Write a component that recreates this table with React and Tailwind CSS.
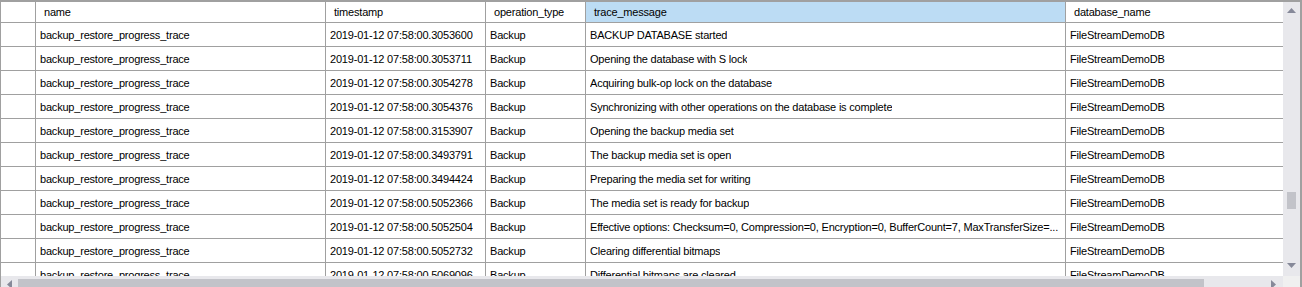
import React from "react";

const cols = [
  { key: "name", label: "name", w: "w-[290px]" },
  { key: "ts", label: "timestamp", w: "w-[160px]" },
  { key: "op", label: "operation_type", w: "w-[100px]" },
  { key: "msg", label: "trace_message", w: "w-[480px]" },
  { key: "db", label: "database_name", w: "w-[218px]" },
];

const msgs = [
  ["2019-01-12 07:58:00.3053600", "BACKUP DATABASE started"],
  ["2019-01-12 07:58:00.3053711", "Opening the database with S lock"],
  ["2019-01-12 07:58:00.3054278", "Acquiring bulk-op lock on the database"],
  ["2019-01-12 07:58:00.3054376", "Synchronizing with other operations on the database is complete"],
  ["2019-01-12 07:58:00.3153907", "Opening the backup media set"],
  ["2019-01-12 07:58:00.3493791", "The backup media set is open"],
  ["2019-01-12 07:58:00.3494424", "Preparing the media set for writing"],
  ["2019-01-12 07:58:00.5052366", "The media set is ready for backup"],
  ["2019-01-12 07:58:00.5052504", "Effective options: Checksum=0, Compression=0, Encryption=0, BufferCount=7, MaxTransferSize=..."],
  ["2019-01-12 07:58:00.5052732", "Clearing differential bitmaps"],
  ["2019-01-12 07:58:00.5069096", "Differential bitmaps are cleared"],
];

const rows = msgs.map(([ts, msg]) => ({
  name: "backup_restore_progress_trace",
  ts,
  op: "Backup",
  msg,
  db: "FileStreamDemoDB",
}));

export default function App() {
  return (
    <div className="w-[1302px] h-[287px] overflow-hidden bg-white border-t-2 border-l border-[#a0a0a0] flex flex-col text-[11px] tracking-[-0.2px] text-black font-['Liberation_Sans',Arial,sans-serif] leading-none">
      <div className="flex h-[274px] shrink-0">
        {/* grid */}
        <div className="w-[1282px] overflow-hidden">
          <div className="flex h-[21px] border-b border-[#a0a0a0]">
            <div className="w-[35px] shrink-0 border-r border-[#a0a0a0]" />
            {cols.map((c) => (
              <div
                key={c.key}
                className={`${c.w} shrink-0 border-r border-[#a0a0a0] flex items-center pl-[8px] ${c.key === "msg" ? "bg-[#bcdcf4]" : ""}`}
              >
                {c.label}
              </div>
            ))}
          </div>
          {rows.map((r, i) => (
            <div key={i} className="flex h-[24px] border-b border-[#a0a0a0]">
              <div className="w-[35px] shrink-0 border-r border-[#a0a0a0]" />
              {cols.map((c) => (
                <div
                  key={c.key}
                  className={`${c.w} shrink-0 border-r border-[#a0a0a0] flex items-center pl-[4px] pr-[4px] pt-[2px] whitespace-nowrap overflow-hidden`}
                >
                  <span className="truncate">{r[c.key]}</span>
                </div>
              ))}
            </div>
          ))}
        </div>
        {/* vertical scrollbar */}
        <div className="w-[17px] shrink-0 bg-[#e8e8ec] flex flex-col items-center">
          <svg width="9" height="5" viewBox="0 0 9 5" className="mt-[6px]">
            <path d="M0 5 L4.5 0 L9 5 Z" fill="#868999" />
          </svg>
          <div className="w-[9px] h-[17px] bg-[#c2c3c9] mt-[179px]" />
          <svg width="9" height="5" viewBox="0 0 9 5" className="mt-[54px]">
            <path d="M0 0 L9 0 L4.5 5 Z" fill="#868999" />
          </svg>
        </div>
        <div className="w-[2px] shrink-0 bg-[#a0a0a0]" />
      </div>
      {/* horizontal scrollbar */}
      <div className="flex h-[17px] shrink-0">
        <div className="w-[1282px] shrink-0 bg-[#e8e8ec] flex items-start">
          <svg width="5" height="9" viewBox="0 0 5 9" className="ml-[6px] mt-[4px]">
            <path d="M5 0 L5 9 L0 4.5 Z" fill="#868999" />
          </svg>
          <div className="w-[1186px] h-[9px] bg-[#c2c3c9] ml-[6px] mt-[3px]" />
          <svg width="5" height="9" viewBox="0 0 5 9" className="ml-[67px] mt-[4px]">
            <path d="M0 0 L5 4.5 L0 9 Z" fill="#868999" />
          </svg>
        </div>
        <div className="w-[17px] shrink-0 bg-[#f0f0f0]" />
        <div className="w-[2px] shrink-0 bg-[#a0a0a0]" />
      </div>
    </div>
  );
}
